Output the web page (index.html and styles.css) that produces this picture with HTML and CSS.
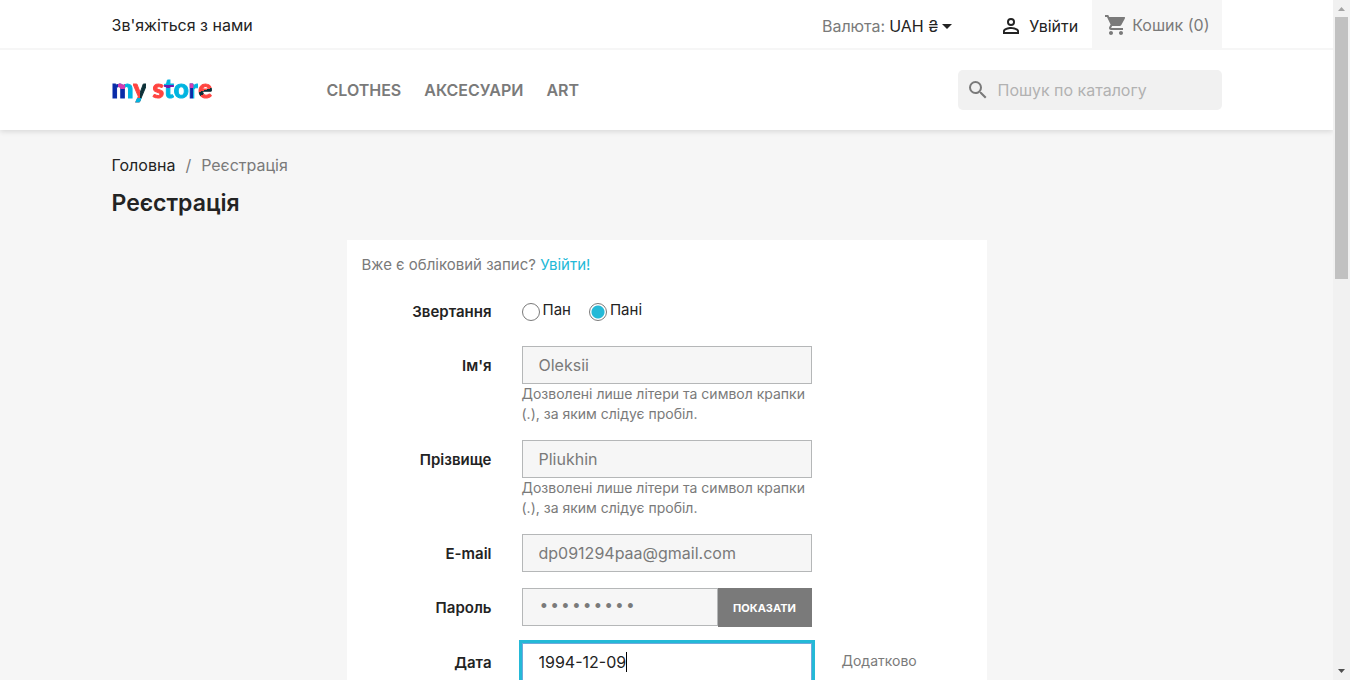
FILE: index.html
```html
<!DOCTYPE html>
<html lang="uk">
<head>
<meta charset="utf-8">
<meta name="viewport" content="width=device-width, initial-scale=1">
<title>Реєстрація</title>
<link rel="stylesheet" href="styles.css">
</head>
<body>
<div class="window">
  <div class="page">
    <header class="header">
      <div class="topbar">
        <div class="container topbar-row">
          <a class="contact" href="#">Зв'яжіться з нами</a>
          <div class="tools">
            <div class="currency">
              <label for="currency">Валюта:</label>
              <select id="currency" class="currency-select"><option>UAH ₴</option></select>
              <svg class="caret-down" viewBox="0 0 10 5" aria-hidden="true"><path d="M0 0h10L5 5z"/></svg>
            </div>
            <a class="login" href="#">
              <svg class="icon" viewBox="0 0 24 24" aria-hidden="true"><path d="M12 5.9a2.1 2.1 0 1 1 0 4.2 2.1 2.1 0 0 1 0-4.200m0 9c2.970 0 6.100 1.460 6.100 2.100v1.100H5.900V17c0-.64 3.130-2.100 6.100-2.100M12 4a4 4 0 1 0 0 8 4 4 0 0 0 0-8zm0 9c-2.670 0-8 1.340-8 4v3h16v-3c0-2.660-5.330-4-8-4z"/></svg>
              <span>Увійти</span>
            </a>
            <a class="cart" href="#">
              <svg class="icon" viewBox="0 0 24 24" aria-hidden="true"><path d="M7 18c-1.100 0-1.990.9-1.990 2S5.900 22 7 22s2-.9 2-2-.9-2-2-2zM1 2v2h2l3.600 7.590-1.350 2.450c-.16.28-.25.61-.25.96 0 1.100.9 2 2 2h12v-2H7.420c-.14 0-.25-.11-.25-.25l.03-.12.9-1.630h7.450c.75 0 1.410-.41 1.750-1.030l3.580-6.490A1 1 0 0 0 20 4H5.210l-.94-2H1zm16 16c-1.100 0-1.990.9-1.990 2s.89 2 1.990 2 2-.9 2-2-.9-2-2-2z"/></svg>
              <span>Кошик (0)</span>
            </a>
          </div>
        </div>
      </div>
      <div class="container mainbar">
        <a class="logo" href="#"><span class="l-m">m</span><span class="l-y">y</span> <span class="l-s">s</span><span class="l-t">t</span><span class="l-o">o</span><span class="l-r">r</span><span class="l-e">e</span></a>
        <nav class="menu">
          <a href="#">CLOTHES</a>
          <a href="#">АКСЕСУАРИ</a>
          <a href="#">ART</a>
        </nav>
        <form class="search">
          <svg class="icon" viewBox="0 0 24 24" aria-hidden="true"><path d="M15.500 14h-.79l-.28-.27A6.470 6.470 0 0 0 16 9.500 6.500 6.500 0 1 0 9.500 16c1.610 0 3.090-.59 4.230-1.570l.27.28v.79l5 4.990L20.490 19l-4.990-5zm-6 0a4.500 4.500 0 1 1 0-9 4.500 4.500 0 0 1 0 9z"/></svg>
          <input type="text" placeholder="Пошук по каталогу" aria-label="Пошук по каталогу">
        </form>
      </div>
    </header>

    <main class="container">
      <nav class="breadcrumb"><a href="#">Головна</a><span>/</span><span>Реєстрація</span></nav>
      <h1 class="title">Реєстрація</h1>
      <section class="card">
        <p class="have-account">Вже є обліковий запис? <a href="#">Увійти!</a></p>
        <form class="form">
          <div class="row row-radio" role="radiogroup" aria-labelledby="gender-label">
            <span class="label" id="gender-label">Звертання</span>
            <div class="radios">
              <label class="radio"><input type="radio" name="gender"><span>Пан</span></label>
              <label class="radio"><input type="radio" name="gender" checked><span>Пані</span></label>
            </div>
          </div>
          <div class="row">
            <label class="label" for="firstname">Ім'я</label>
            <div class="field">
              <input class="control" id="firstname" type="text" value="Oleksii">
              <p class="hint">Дозволені лише літери та символ крапки (.), за яким слідує пробіл.</p>
            </div>
          </div>
          <div class="row">
            <label class="label" for="lastname">Прізвище</label>
            <div class="field">
              <input class="control" id="lastname" type="text" value="Pliukhin">
              <p class="hint">Дозволені лише літери та символ крапки (.), за яким слідує пробіл.</p>
            </div>
          </div>
          <div class="row">
            <label class="label" for="email">E-mail</label>
            <div class="field"><input class="control" id="email" type="email" value="dp091294paa@gmail.com"></div>
          </div>
          <div class="row">
            <label class="label" for="password">Пароль</label>
            <div class="field password">
              <input class="control" id="password" type="password" value="qwerty123">
              <button class="show" type="button">ПОКАЗАТИ</button>
            </div>
          </div>
          <div class="row">
            <label class="label" for="birthday">Дата</label>
            <div class="field date">
              <input class="control active" id="birthday" type="text" value="1994-12-09">
              <span class="text-caret"></span>
            </div>
            <span class="note">Додатково</span>
          </div>
        </form>
      </section>
    </main>
  </div>
  <div class="scrollbar" aria-hidden="true">
    <svg class="arrow" viewBox="0 0 17 17"><path fill="#a3a3a3" d="M5 11h7L8.500 7z"/></svg>
    <div class="track"><div class="thumb"></div></div>
    <svg class="arrow" viewBox="0 0 17 17"><path fill="#505050" d="M5 6h7L8.500 10z"/></svg>
  </div>
</div>
</body>
</html>
```
FILE: styles.css
```css
* { box-sizing: border-box; }
body {
  margin: 0;
  font-family: Inter, "Noto Sans", sans-serif;
  font-size: 16px;
  line-height: 20px;
  color: #232323;
  background: #f6f6f6;
}
a { color: inherit; text-decoration: none; }
p, h1 { margin: 0; }
input, select, button { font: inherit; color: inherit; }

.window { display: flex; height: 100vh; overflow: hidden; }
.page { flex: 1; min-width: 0; }
.container { width: 100%; max-width: 1140px; margin: 0 auto; padding: 0 15px; }

.header { background: #fff; box-shadow: 0 2px 5px 0 rgba(0, 0, 0, .11); }
.topbar { border-bottom: 2px solid #f6f6f6; }
.topbar-row { display: flex; justify-content: space-between; align-items: center; height: 48px; }
.contact { padding-top: 2px; }
.tools { display: flex; align-items: center; align-self: stretch; }
.currency { display: flex; align-items: center; gap: 4px; margin-right: 47px; padding-top: 4px; color: #7a7a7a; }
.currency-select {
  appearance: none;
  padding: 0;
  border: 0;
  background: none;
  color: #232323;
  field-sizing: content;
}
.caret-down { width: 10px; height: 5px; fill: #232323; }
.icon { width: 24px; height: 24px; fill: currentColor; flex: none; }
.login { display: flex; align-items: center; gap: 6px; margin-right: 14px; padding-top: 4px; }
.cart {
  display: flex;
  align-items: center;
  align-self: stretch;
  gap: 4px;
  padding: 2px 12px 0;
  color: #7a7a7a;
  background: #f6f6f6;
}

.mainbar { display: flex; align-items: center; height: 80px; }
.logo {
  width: 215px;
  padding-bottom: 4px;
  font-family: Lato, sans-serif;
  font-size: 26px;
  font-weight: 900;
  line-height: 32px;
}
.logo span { color: transparent; -webkit-text-stroke: 1px transparent; }
.logo .l-m { background: linear-gradient(#d63bb0, #d63bb0) 45% 0 / 35% 54% no-repeat, linear-gradient(to right, #0a2ca8 62%, #00b4e0 62%); }
.logo .l-y { background: linear-gradient(#0000 82%, #00b4e0 82%), linear-gradient(to right, #ff4440 52%, #0c3038 52%); }
.logo .l-s { background: #ff4440; }
.logo .l-t { background: linear-gradient(#00b4e0 40%, #6a1bb0 40% 50%, #00b4e0 50%); }
.logo .l-o { background: #00b4e0; }
.logo .l-r { background: linear-gradient(#d63bb0, #d63bb0) 0 0 / 50% 50% no-repeat, linear-gradient(to right, #0a2ca8 50%, #00b4e0 50%); }
.logo .l-e { background: linear-gradient(160deg, #ff4440 56%, #0c3038 56% 66%, #ff4440 66%); }
.logo span[class] { background-clip: text; }
.menu { display: flex; gap: 23px; flex: 1; font-weight: 600; color: #7a7a7a; }
.search {
  display: flex;
  align-items: center;
  gap: 8px;
  width: 264px;
  height: 40px;
  padding: 0 8px;
  border-radius: 5px;
  background: #f1f1f1;
  color: #7a7a7a;
}
.search input { flex: 1; min-width: 0; padding: 0; border: 0; background: none; outline: 0; }
.search input::placeholder { color: #b2b2b2; opacity: 1; }

.breadcrumb { display: flex; gap: 10px; padding-top: 25px; color: #7a7a7a; }
.breadcrumb a { color: #232323; }
.title { margin-top: 14px; font-size: 23px; line-height: 28px; font-weight: 600; }

.card { max-width: 640px; margin: 23px auto 0; padding: 15px 0; background: #fff; }
.have-account { padding: 0 15px; color: #7a7a7a; font-size: 15px; }
.have-account a { color: #24b9d7; }
.form { display: flex; flex-direction: column; gap: 16px; margin-top: 24px; font-size: 15px; }
.row { display: grid; grid-template-columns: 1fr 2fr 1fr; }
.label { padding: 10px 15px 0 0; font-weight: 600; text-align: right; }
.field { margin: 0 15px; }
.row-radio { height: 31px; }
.row-radio .label { padding-top: 3px; }
.radios { display: flex; gap: 18px; margin: 0 15px; }
.radio { display: flex; align-items: flex-start; gap: 3px; height: 24px; }
.radio span { padding-top: 1px; }
.radio input {
  appearance: none;
  width: 18px;
  height: 18px;
  margin: 4px 0 0;
  border: 1px solid #7a7a7a;
  border-radius: 50%;
  background: #fff;
}
.radio input:checked { background: radial-gradient(#24b9d7 6px, #fff 7px); }
.control {
  display: block;
  width: 100%;
  height: 38px;
  padding: 0 16px;
  border: 1px solid #b5b7b8;
  border-radius: 0;
  background: #f6f6f6;
  color: #7a7a7a;
  font-size: 16px;
}
.hint { color: #7a7a7a; font-size: 14px; line-height: 20px; }
.password { display: flex; }
.password .control { flex: 1; min-width: 0; font-family: "Liberation Mono", monospace; font-size: 18px; }
.show {
  width: 94px;
  height: 39px;
  padding: 0;
  border: 0;
  background: #7a7a7a;
  color: #fff;
  font-size: 11px;
  font-weight: 700;
}
.date { position: relative; }
.active { outline: 3px solid #24b9d7; border-color: #6fa9dc; background: #fff; color: #232323; }
.text-caret { position: absolute; left: 104px; top: 9px; width: 1px; height: 20px; background: #000; }
.note { padding: 8px 15px; color: #7a7a7a; font-size: 14px; }

.scrollbar { display: flex; flex-direction: column; width: 17px; background: #f1f1f1; }
.arrow { width: 17px; height: 17px; }
.track { flex: 1; padding: 0 2px; }
.thumb { height: 262px; background: #c1c1c1; }
```
